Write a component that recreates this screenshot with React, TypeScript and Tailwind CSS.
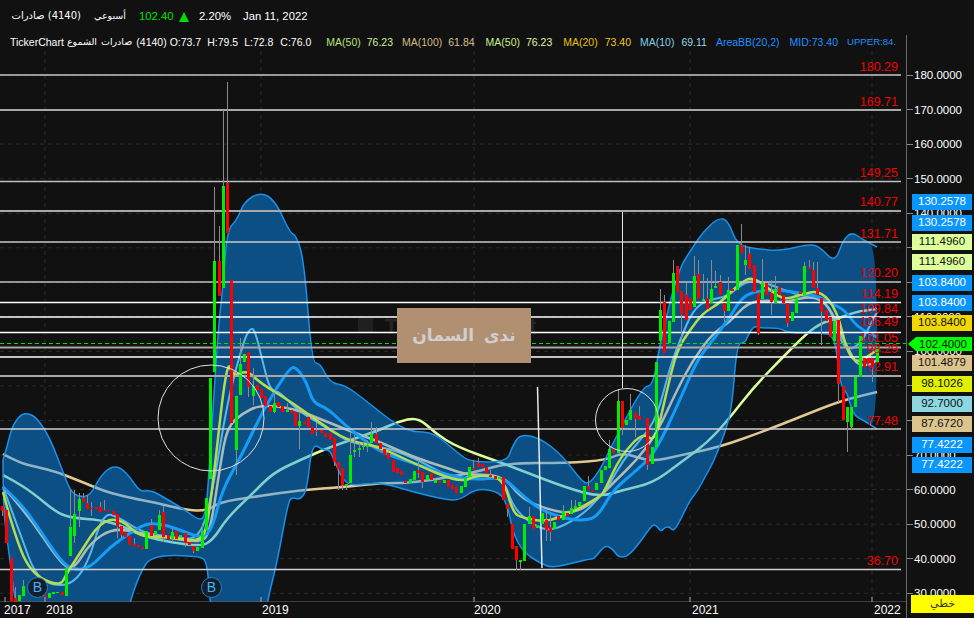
import React from 'react'

// rounds the hand-read points into a curve
const smooth = (a: number[][]) => {
  let d = `M${a[0][0]} ${a[0][1]}`
  for (let i = 1; i < a.length - 1; i++) {
    const mx = (a[i][0] + a[i + 1][0]) / 2
    const my = (a[i][1] + a[i + 1][1]) / 2
    d += `Q${a[i][0]} ${a[i][1]} ${mx} ${my}`
  }
  const l = a[a.length - 1]
  return d + `L${l[0]} ${l[1]}`
}

// price to page y
const priceY = (p: number) => 75 + (180 - p) * 3.455

const upper = [[3,460],[7,447],[12,427],[20,415],[28,413],[37,418],[50,438],[63,472],[70,490],[78,497],[90,496],[100,477],[110,467],[120,467],[130,477],[140,492],[150,490],[160,495],[170,501],[185,510],[200,521],[205,515],[208,490],[218,330],[223,287],[227,230],[237,220],[244,202],[260,192],[275,200],[290,233],[296,235],[304,260],[312,363],[320,363],[330,383],[345,385],[365,400],[380,412],[397,425],[413,432],[433,432],[458,453],[470,462],[507,462],[512,447],[520,434],[540,438],[562,455],[583,483],[590,483],[600,470],[613,443],[643,386],[653,386],[660,343],[678,270],[693,247],[703,232],[718,218],[728,220],[737,245],[757,249],[780,251],[810,244],[820,247],[835,263],[843,240],[852,232],[862,239],[877,247]]
const lower = [[3,460],[3,510],[10,560],[15,602],[25,640],[120,640],[130,602],[140,573],[152,555],[200,556],[207,562],[210,600],[215,640],[262,640],[267,602],[277,563],[288,503],[292,497],[300,500],[307,490],[312,443],[323,450],[330,450],[335,463],[343,480],[352,486],[380,482],[413,492],[447,500],[460,500],[477,488],[500,492],[508,507],[513,533],[523,552],[540,563],[552,568],[577,562],[590,559],[594,559],[605,545],[613,549],[618,557],[627,557],[638,545],[652,525],[656,525],[661,532],[665,527],[670,527],[673,531],[678,525],[690,500],[697,492],[705,477],[713,463],[725,433],[732,407],[737,343],[745,343],[748,335],[754,326],[760,328],[780,328],[788,333],[820,333],[835,335],[840,385],[847,392],[853,415],[863,420],[877,429]]
const bandShape = smooth([...upper, ...[...lower].reverse()]) + 'Z'

const beige = [[3,454],[20,463],[37,467],[57,472],[77,480],[97,488],[110,493],[140,500],[153,502],[185,510],[207,511],[220,502],[253,497],[300,490],[345,487],[380,483],[413,483],[473,473],[507,463],[567,463],[607,460],[623,452],[650,462],[677,456],[720,447],[767,430],[800,417],[840,401],[877,392]]
const limeLong = [[3,475],[13,480],[33,493],[57,513],[73,518],[100,520],[120,525],[147,538],[200,547],[213,540],[227,518],[253,493],[273,473],[300,460],[330,447],[380,430],[397,422],[418,417],[435,433],[457,447],[502,463],[520,470],[567,488],[600,497],[623,490],[653,483],[680,463],[707,443],[728,420],[753,388],[780,360],[807,333],[823,322],[840,318],[855,312],[877,309]]

const blueMa = [[3,487],[20,502],[40,530],[60,560],[73,570],[90,568],[110,547],[130,533],[147,523],[167,525],[187,533],[203,538],[213,527],[222,490],[243,453],[263,410],[290,367],[297,368],[307,383],[313,403],[327,408],[345,425],[360,437],[380,452],[413,463],[447,475],[473,480],[503,477],[520,493],[540,510],[570,520],[590,520],[600,513],[613,490],[637,470],[655,453],[680,400],[697,360],[713,340],[730,317],[740,300],[753,291],[780,290],[800,293],[820,297],[830,303],[845,310],[857,327],[877,337]]
const grayMa = [[3,487],[27,513],[63,567],[75,568],[90,543],[113,528],[140,533],[167,537],[200,543],[210,533],[220,467],[227,427],[243,413],[260,405],[293,408],[330,423],[355,433],[380,442],[413,457],[447,468],[467,475],[503,475],[520,497],[540,507],[573,515],[600,497],[613,483],[637,460],[657,433],[677,390],[693,360],[713,333],[730,322],[747,303],[767,300],[783,303],[813,295],[830,307],[840,333],[850,352],[857,365],[870,365],[877,360]]
const limeMa = [[3,492],[13,530],[30,573],[60,587],[67,573],[80,553],[100,522],[120,518],[140,537],[167,537],[200,542],[207,527],[213,483],[227,358],[233,377],[247,370],[260,383],[293,403],[330,430],[350,441],[380,447],[413,463],[460,483],[477,475],[503,477],[513,513],[523,518],[547,522],[570,513],[600,497],[605,490],[620,457],[643,432],[655,443],[667,390],[677,350],[690,330],[703,313],[720,303],[740,283],[752,277],[767,287],[783,300],[800,295],[820,290],[837,310],[847,352],[857,363],[870,355],[877,350]]
const skyMa = [[3,487],[20,533],[37,580],[67,588],[87,567],[103,512],[120,518],[143,533],[173,537],[200,540],[213,490],[227,403],[243,343],[250,328],[255,330],[263,363],[270,390],[280,392],[297,410],[330,430],[352,444],[380,446],[413,457],[460,483],[470,473],[503,477],[513,507],[530,523],[550,532],[580,517],[600,497],[608,487],[623,460],[643,437],[657,417],[670,367],[680,340],[693,310],[707,300],[727,297],[747,280],[767,283],[783,290],[807,297],[827,300],[840,340],[848,350],[860,345],[877,312]]

// x, top, bottom, wick top, wick bottom, green
const candles: number[][] = [
  [2,506,511,0,516,0],[6,510,543,0,0,0],[11,558,601,0,0,0],[15,598,602,587,0,0],[19,595,601,0,0,1],[23,586,596,580,0,1],[45,595,597,0,0,0],[49,593,598,0,0,1],[53,592,594,0,0,1],[57,592,593,0,0,1],[62,592,595,0,0,0],[66,568,596,0,0,1],
  [70,527,556,490,556,1],[74,514,536,490,543,1],[79,499,511,493,527,1],[83,498,502,493,0,0],[87,503,509,495,0,0],[91,508,509,502,516,0],[96,507,509,0,0,0],[100,507,512,502,0,0],[104,510,511,500,0,0],[108,510,511,0,0,0],[113,511,515,0,0,0],[117,514,527,0,538,0],[121,526,535,0,538,0],[125,533,537,0,0,0],[129,536,545,0,0,0],[134,544,546,538,0,0],[138,545,547,0,0,0],[142,547,549,0,0,0],[146,531,549,0,0,1],[151,525,536,519,0,0],[155,531,535,0,0,1],[159,515,530,510,0,1],[163,512,537,506,542,0],[168,535,539,0,0,0],[172,532,539,528,542,1],[176,531,539,0,0,0],[180,535,537,0,0,1],[185,533,543,0,547,0],[189,542,545,0,0,0],[193,546,551,0,553,0],[197,547,551,0,0,1],[202,531,548,523,0,1],[206,498,530,0,0,1],
  [210,378,479,0,0,1],[214,261,372,187,372,1],[219,261,296,226,296,0],[223,186,288,110,0,1],[227,183,233,82,0,0],[231,280,423,0,0,0],[236,396,450,0,475,1],[240,364,395,338,0,1],[244,354,362,0,0,1],[248,352,387,0,397,0],[253,386,396,368,405,1],[257,385,390,0,0,0],[261,389,398,0,0,0],[265,396,406,0,0,0],[270,406,412,0,0,0],[274,403,412,392,413,1],[278,402,407,0,0,0],[282,406,412,0,0,0],[287,410,412,403,0,1],[291,410,413,0,0,0],[295,412,426,0,0,0],[299,421,426,412,449,1],[304,422,424,0,0,0],[308,417,427,0,0,0],[312,427,434,0,0,0],[316,431,432,423,436,0],[321,430,433,0,0,0],[325,433,437,0,0,0],[330,433,440,0,0,0],[334,438,462,0,466,0],[338,462,469,0,490,0],[342,468,485,0,490,0],[346,484,486,0,490,1],[350,455,483,432,0,1],[354,450,452,435,457,1],[359,448,450,443,457,1],[363,446,447,442,450,1],[367,445,447,440,452,1],[371,434,443,422,0,1],[376,434,443,427,0,0],[380,443,449,0,0,0],[384,449,455,0,0,0],[388,453,459,0,0,0],[393,460,472,0,0,0],[397,468,473,0,0,0],[401,471,475,0,0,0],[405,481,483,0,0,0],[410,479,483,0,0,1],[414,471,480,0,0,1],[418,470,473,460,478,0],[422,472,482,0,488,0],[427,475,480,0,0,1],[431,473,480,0,0,0],[435,480,483,0,0,1],[439,481,483,0,0,0],[444,480,483,0,0,1],[448,480,487,0,0,0],[452,485,489,0,0,0],[456,487,493,0,0,0],[461,486,493,0,0,1],[465,478,487,0,0,1],[469,467,477,0,0,1],[473,468,470,460,0,0],[478,463,467,458,0,0],[482,464,467,0,0,0],[486,467,473,0,0,0],[490,475,477,470,0,0],[495,476,479,0,0,0],[499,477,479,0,0,1],[503,477,500,0,0,0],[507,504,509,0,517,0],[512,524,549,0,0,0],[516,546,560,0,570,0],[520,560,562,0,570,1],[524,524,561,0,0,1],[529,516,524,507,0,1],[533,516,529,0,0,0],[537,525,528,0,0,1],[542,513,524,0,0,1],[546,520,530,510,541,0],[550,527,532,515,541,0],[554,522,529,0,0,1],[558,516,520,0,0,0],[563,511,520,505,0,1],[567,513,516,0,0,0],[571,508,514,500,0,1],[575,506,509,500,0,1],[579,502,506,0,0,1],[584,486,501,0,0,1],[588,486,489,476,0,0],[592,490,492,0,0,0],[596,483,490,0,0,1],[601,470,483,0,0,1],[605,466,470,0,0,1],[609,449,468,440,0,1],[613,449,453,0,0,0],[618,401,453,389,0,1],[622,401,428,0,435,0],[626,420,425,0,0,1],[630,410,420,394,0,1],[635,413,419,0,437,0],[639,416,420,406,0,0],[647,418,465,0,470,0],[652,447,464,0,0,1],[656,362,447,0,0,1],[660,310,341,289,0,1],[664,302,353,295,0,0],[669,321,343,0,0,1],[673,273,322,260,0,1],[677,266,292,0,0,0],[681,291,315,0,343,0],[686,295,320,283,320,0],[690,298,310,0,0,0],[694,276,307,256,0,1],[698,274,299,260,0,0],[703,299,301,274,0,1],[707,298,309,278,0,0],[711,289,303,260,0,1],[715,286,288,271,0,1],[720,282,295,275,0,0],[724,303,311,0,322,0],[728,290,311,277,0,1],[732,289,291,0,0,0],[737,245,290,0,0,1],[741,245,253,224,0,0],[745,260,265,245,275,1],[749,254,269,247,0,0],[754,265,292,0,0,0],[758,293,333,0,335,0],[762,283,299,259,0,1],[766,283,295,0,0,0],[771,293,302,280,315,0],[775,289,303,276,0,1],[779,287,295,0,0,0],[783,295,303,0,0,0],[787,303,323,0,327,0],[792,312,321,0,0,1],[796,297,313,0,0,1],[800,292,294,0,0,0],[804,266,295,262,0,1],[809,267,269,260,0,0],[813,270,288,262,0,0],[817,288,295,262,0,0],[821,298,312,0,345,0],[826,310,321,0,0,0],[830,317,337,0,0,0],[834,321,341,0,0,1],[838,320,384,0,402,0],[843,386,420,0,0,0],[847,407,422,0,452,1],[851,407,427,0,430,1],[855,377,407,0,0,1],[860,336,377,0,0,1],[864,358,367,0,0,0],[868,358,363,0,0,0],[872,358,367,0,382,0],[877,347,362,0,0,1],
]

const levels: [number, string, number, string, number][] = [
  [75, '180.29', 71, '#c8c8c8', 1.5],
  [110, '169.71', 106, '#a8a8a8', 2],
  [181.5, '149.25', 177, '#c0c0c0', 1.5],
  [211, '140.77', 206, '#a8a8a8', 2],
  [242, '131.71', 238, '#c8c8c8', 1.5],
  [282, '120.20', 277, '#c0c0c0', 1.5],
  [302.5, '114.19', 298, '#ffffff', 1.5],
  [317, '109.84', 313, '#ffffff', 1.5],
  [332.5, '105.49', 326, '#ffffff', 1.5],
  [347.5, '101.05', 342, '#a8a8a8', 2],
  [357, '98.29', 353, '#ffffff', 1.5],
  [376, '92.91', 371, '#a8a8a8', 2],
  [429, '77.48', 425, '#d0d0d0', 1.5],
  [569.5, '36.70', 565, '#d0d0d0', 1.5],
]

const ticks = [180, 170, 160, 150, 140, 130, 120, 110, 100, 90, 80, 70, 60, 50, 40, 30]
// the rest sit fully under the price tags
const tickLabels = [180, 170, 160, 150, 140, 110, 100, 70, 60, 50, 40, 30]

const tags = [
  { v: '130.2578', top: 194, bg: 'bg-[#0a96ff] text-white' },
  { v: '130.2578', top: 215, bg: 'bg-[#0a96ff] text-white' },
  { v: '111.4960', top: 234, bg: 'bg-[#dcff9b] text-[#111]' },
  { v: '111.4960', top: 254, bg: 'bg-[#dcff9b] text-[#111]' },
  { v: '103.8400', top: 275, bg: 'bg-[#0a96ff] text-white' },
  { v: '103.8400', top: 295, bg: 'bg-[#0a96ff] text-white' },
  { v: '103.8400', top: 315, bg: 'bg-[#f0d800] text-[#111]' },
  { v: '101.4879', top: 355, bg: 'bg-[#dcc48d] text-[#111]' },
  { v: '98.1026', top: 376, bg: 'bg-[#e0f000] text-[#111]' },
  { v: '92.7000', top: 396, bg: 'bg-[#8dd8e0] text-[#111]' },
  { v: '87.6720', top: 416, bg: 'bg-[#dcc48d] text-[#111]' },
  { v: '77.4222', top: 437, bg: 'bg-[#0a96ff] text-white' },
  { v: '77.4222', top: 457, bg: 'bg-[#0a96ff] text-white' },
]

const years = [
  { y: '2017', x: 4 },
  { y: '2018', x: 46 },
  { y: '2019', x: 262 },
  { y: '2020', x: 474 },
  { y: '2021', x: 692 },
  { y: '2022', x: 874 },
]

function Chart() {
  return (
    <svg width="906" height="567" viewBox="0 35 906 567" className="block">
      <defs>
        <clipPath id="band">
          <path d={bandShape} />
        </clipPath>
      </defs>
      {/* grid */}
      {ticks.map((t) => (
        <line key={t} x1="0" x2="901" y1={priceY(t)} y2={priceY(t)} stroke="#2a2a2a" strokeDasharray="4 4" />
      ))}
      {[45, 261, 474, 690, 872].map((x) => (
        <line key={x} x1={x} x2={x} y1="35" y2="602" stroke="#2a2a2a" strokeDasharray="4 4" />
      ))}
      <rect x="358" y="318" width="15" height="15" fill="#202020" />
      <text x="462" y="334" textAnchor="middle" fontFamily="Liberation Sans" fontWeight="700" fontSize="22" letterSpacing="3" fill="#262626">TickerChart</text>

      {/* long averages, dimmed where the band covers them */}
      <path d={smooth(beige)} fill="none" stroke="#e2c994" strokeWidth="2.5" />
      <path d={smooth(limeLong)} fill="none" stroke="#dcff9b" strokeWidth="2.5" />
      <path d={bandShape} fill="#0b4f85" />
      <g clipPath="url(#band)">
        <path d={smooth(beige)} fill="none" stroke="#8fb4c6" strokeWidth="2.5" />
        <path d={smooth(limeLong)} fill="none" stroke="#7fd0cc" strokeWidth="2.5" />
      </g>
      <path d={smooth(upper)} fill="none" stroke="#1a90e8" strokeWidth="1.5" />
      <path d={smooth(lower)} fill="none" stroke="#1a90e8" strokeWidth="1.5" />

      {/* short averages */}
      <path d={smooth(skyMa)} fill="none" stroke="#5ab8e8" strokeWidth="2" />
      <path d={smooth(grayMa)} fill="none" stroke="#a9bcb8" strokeWidth="2.5" />
      <path d={smooth(blueMa)} fill="none" stroke="#159cf7" strokeWidth="3" />
      <path d={smooth(limeMa)} fill="none" stroke="#b4dc50" strokeWidth="2.5" />

      {/* level lines */}
      {levels.map(([y, , , c, w]) => (
        <line key={y} x1="0" x2="901" y1={y} y2={y} stroke={c} strokeWidth={w} />
      ))}
      <line x1="0" x2="906" y1="343.5" y2="343.5" stroke="#00e000" strokeDasharray="4 3" />
      <line x1="622.5" x2="622.5" y1="212" y2="388" stroke="#e8e8e8" strokeWidth="1" />
      <line x1="537.5" x2="542" y1="387" y2="568" stroke="#e8e8e8" strokeWidth="1.5" />

      {/* candles */}
      {candles.map(([x, t, b, wt, wb, g], i) => (
        <g key={i}>
          {(wt > 0 || wb > 0) && (
            <line x1={x + 0.5} x2={x + 0.5} y1={wt || t} y2={wb || b} stroke="#8a8a8a" />
          )}
          <rect x={x - 1} y={t} width="3" height={b - t} fill={g ? '#00ee00' : '#ff0000'} />
        </g>
      ))}

      <circle cx="211" cy="418" r="53" fill="none" stroke="#e0e0e0" />
      <circle cx="627" cy="420" r="31.5" fill="none" stroke="#e0e0e0" />

      {levels.map(([y, label, base]) => (
        <text key={y} x="898" y={base} textAnchor="end" fontFamily="Liberation Sans" fontSize="12.5" fill="#f00000">{label}</text>
      ))}

      <line x1="0" x2="906" y1="602" y2="602" stroke="#6a6a6a" />
      {[5, 45, 261, 474, 690, 872].map((x) => (
        <line key={x} x1={x} x2={x} y1="597" y2="602" stroke="#aaaaaa" />
      ))}
    </svg>
  )
}

function Badge({ left }: { left: string }) {
  return (
    <div className={`absolute top-[542px] ${left} flex h-[21px] w-[21px] items-center justify-center rounded-full border border-[#2f7fb8] bg-[#10202e] text-[14px] text-[#4aaef0]`}>
      B
    </div>
  )
}

export default function App() {
  return (
    <div className="flex h-[618px] w-[974px] flex-col overflow-hidden bg-[#111111] font-['Liberation_Sans','DejaVu_Sans',sans-serif] text-white">
      {/* header */}
      <div className="flex h-[35px] shrink-0 items-start pl-[12px] pt-[9px] text-[11.3px] leading-[14px]">
        <span dir="rtl" className="w-[69px] whitespace-nowrap font-['DejaVu_Sans',sans-serif] text-[10px]">(4140) صادرات</span>
        <span className="ml-[13px] w-[29px] whitespace-nowrap font-['DejaVu_Sans',sans-serif] text-[9.5px]">أسبوعي</span>
        <span className="ml-[16px] w-[32px] whitespace-nowrap text-[#00e000]">102.40</span>
        <span className="ml-[8px] mt-[3px] h-0 w-0 border-x-[5.5px] border-b-[10px] border-x-transparent border-b-[#00e000]"></span>
        <span className="ml-[10px] w-[30px] whitespace-nowrap">2.20%</span>
        <span className="ml-[14px] whitespace-nowrap">Jan 11, 2022</span>
      </div>

      <div className="flex flex-1">
        {/* plot */}
        <div className="relative flex w-[906px] shrink-0 flex-col">
          <Chart />
          <div className="absolute left-[10px] top-0 flex h-[14px] w-[892px] items-center overflow-hidden whitespace-nowrap text-[10.5px] leading-[14px]">
            <span>TickerChart</span>
            <span className="ml-[3px] font-['DejaVu_Sans',sans-serif] text-[9.5px]">الشموع</span>
            <span className="ml-[4px] font-['DejaVu_Sans',sans-serif] text-[9.5px]">صادرات</span>
            <span className="ml-[4px]">(4140)</span>
            <span className="ml-[3px]">O:73.7</span>
            <span className="ml-[6px]">H:79.5</span>
            <span className="ml-[6px]">L:72.8</span>
            <span className="ml-[7px]">C:76.0</span>
            <span className="ml-[15px] text-[#b9e27a]">MA(50)</span>
            <span className="ml-[6px] text-[#d0f090]">76.23</span>
            <span className="ml-[9px] text-[#d4b880]">MA(100)</span>
            <span className="ml-[6px] text-[#d8c090]">61.84</span>
            <span className="ml-[11px] text-[#c8ec88]">MA(50)</span>
            <span className="ml-[6px] text-[#e0f8a0]">76.23</span>
            <span className="ml-[11px] text-[#e8c000]">MA(20)</span>
            <span className="ml-[7px] text-[#f0c810]">73.40</span>
            <span className="ml-[9px] text-[#7fd0e8]">MA(10)</span>
            <span className="ml-[7px] text-[#90d8e8]">69.11</span>
            <span className="ml-[9px] text-[#1e90ff]">AreaBB(20,2)</span>
            <span className="ml-[10px] text-[#1e90ff]">MID:73.40</span>
            <span className="ml-[9px] text-[9.6px] text-[#1e90ff]">UPPER:84.</span>
          </div>
          <div className="absolute left-[397px] top-[273px] flex h-[55px] w-[134px] items-center justify-center bg-[#b19071] font-['DejaVu_Sans',sans-serif] text-[17px] font-bold text-[#cfcfcf] [word-spacing:4px]" dir="rtl">
            ندى السمان
          </div>
          <Badge left="left-[27px]" />
          <Badge left="left-[201px]" />
          <div className="relative flex-1 text-[12px] leading-[14px]">
            {years.map((y) => (
              <span key={y.y} className="absolute top-[1px]" style={{ left: y.x }}>{y.y}</span>
            ))}
          </div>
        </div>

        {/* price axis */}
        <div className="relative flex-1 border-l border-[#6a6a6a] text-[11.5px]">
          {ticks.map((t) => (
            <div key={t} className="absolute left-0 flex h-[14px] items-center leading-[14px]" style={{ top: priceY(t) - 42 }}>
              <span className="h-px w-[6px] bg-[#8a8a8a]"></span>
              {tickLabels.includes(t) && <span className="ml-[1px]">{t}.0000</span>}
            </div>
          ))}
          {tags.map((t, i) => (
            <div key={i} className={`absolute left-[5px] flex h-[15.5px] w-[60px] items-center justify-center ${t.bg}`} style={{ top: t.top - 35 }}>
              {t.v}
            </div>
          ))}
          <div className="absolute left-[1px] top-[302px] h-[14px] w-[64px] bg-[#00ff00] pl-[6px] text-center leading-[14px] text-[#111] [clip-path:polygon(0_50%,8px_0,100%_0,100%_100%,8px_100%)]">
            102.4000
          </div>
          <div className="absolute left-[4px] top-[560px] flex h-[18px] w-[63px] items-center justify-center bg-[#ffff00] font-['DejaVu_Sans',sans-serif] text-[11px] text-[#333]">
            خطي
          </div>
        </div>
      </div>
    </div>
  )
}
